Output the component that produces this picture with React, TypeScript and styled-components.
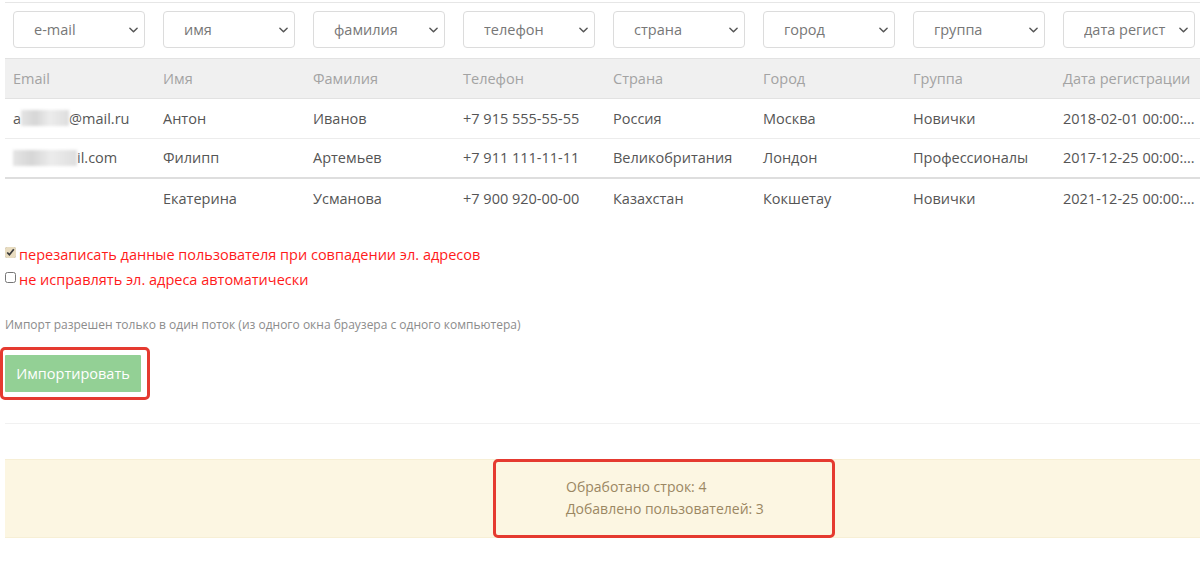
import React from 'react';
import styled, { createGlobalStyle } from 'styled-components';

const GlobalStyle = createGlobalStyle`
  html, body {
    margin: 0;
    padding: 0;
    background: #fff;
    overflow: hidden;
  }
  body {
    font-family: "Open Sans", "Liberation Sans", sans-serif;
  }
`;

const columns = [
  { pick: 'e-mail', title: 'Email' },
  { pick: 'имя', title: 'Имя' },
  { pick: 'фамилия', title: 'Фамилия' },
  { pick: 'телефон', title: 'Телефон' },
  { pick: 'страна', title: 'Страна' },
  { pick: 'город', title: 'Город' },
  { pick: 'группа', title: 'Группа' },
  { pick: 'дата регист', title: 'Дата регистрации' },
];

const rows = [
  {
    email: 'first',
    cells: ['Антон', 'Иванов', '+7 915 555-55-55', 'Россия', 'Москва', 'Новички', '2018-02-01 00:00:...'],
  },
  {
    email: 'second',
    cells: ['Филипп', 'Артемьев', '+7 911 111-11-11', 'Великобритания', 'Лондон', 'Профессионалы', '2017-12-25 00:00:...'],
  },
  {
    email: '',
    cells: ['Екатерина', 'Усманова', '+7 900 920-00-00', 'Казахстан', 'Кокшетау', 'Новички', '2021-12-25 00:00:...'],
  },
];

export default function App() {
  return (
    <Page>
      <GlobalStyle />
      <TopLine />
      <Table>
        <colgroup>
          {columns.map((c) => (
            <Col key={c.pick} />
          ))}
        </colgroup>
        <thead>
          <PickRow>
            {columns.map((c) => (
              <PickCell key={c.pick}>
                <SelectWrap>
                  <Select defaultValue={c.pick}>
                    <option>{c.pick}</option>
                  </Select>
                  <Chevron viewBox="0 0 10 6">
                    <path d="M1 1l4 4 4-4" fill="none" stroke="#555" strokeWidth="1.6" strokeLinecap="round" strokeLinejoin="round" />
                  </Chevron>
                </SelectWrap>
              </PickCell>
            ))}
          </PickRow>
          <HeadRow>
            {columns.map((c) => (
              <HeadCell key={c.title}>{c.title}</HeadCell>
            ))}
          </HeadRow>
        </thead>
        <tbody>
          {rows.map((r, i) => (
            <BodyRow key={i} $thick={i === 1}>
              <Cell>
                {r.email === 'first' && (
                  <>
                    a<Blur $w={48} />@mail.ru
                  </>
                )}
                {r.email === 'second' && (
                  <>
                    <Blur $w={64} />il.com
                  </>
                )}
              </Cell>
              {r.cells.map((v, j) => (
                <Cell key={j}>{v}</Cell>
              ))}
            </BodyRow>
          ))}
        </tbody>
      </Table>

      <Options>
        <OptionLine>
          <Check type="checkbox" defaultChecked />
          <OptionText>перезаписать данные пользователя при совпадении эл. адресов</OptionText>
        </OptionLine>
        <OptionLine>
          <Check type="checkbox" />
          <OptionText>не исправлять эл. адреса автоматически</OptionText>
        </OptionLine>
      </Options>

      <Note>Импорт разрешен только в один поток (из одного окна браузера с одного компьютера)</Note>

      <Highlight $pad="5px 6px 5px 2px" $ml={-5} $mt={14}>
        <ImportButton>Импортировать</ImportButton>
      </Highlight>

      <Divider />

      <Alert>
        <Highlight $pad="14px 60px 15px 70px" $ml={488} $mt={-1} $mb={-1}>
          <AlertText>
            Обработано строк: 4
            <br />
            Добавлено пользователей: 3
          </AlertText>
        </Highlight>
      </Alert>
    </Page>
  );
}

const Page = styled.div`
  padding-left: 5px;
  width: 1300px;
`;

const TopLine = styled.div`
  margin-top: 2px;
  height: 1px;
  width: 1195px;
  background: #e6e6e6;
`;

const Table = styled.table`
  border-collapse: collapse;
  table-layout: fixed;
  width: 1200px;
  font-size: 14.5px;
`;

const Col = styled.col`
  width: 150px;
`;

const PickRow = styled.tr`
  height: 55px;
`;

const PickCell = styled.td`
  padding: 8px 10px 9px 8px;
  vertical-align: top;
`;

const SelectWrap = styled.div`
  position: relative;
  width: 132px;
`;

const Select = styled.select`
  appearance: none;
  width: 132px;
  height: 37px;
  padding: 0 0 0 20px;
  border: 1px solid #dcdcdc;
  border-radius: 4px;
  background: #fff;
  color: #777;
  font-family: "Open Sans", "Liberation Sans", sans-serif;
  font-size: 14.5px;
  outline: none;
`;

const Chevron = styled.svg`
  position: absolute;
  right: 7px;
  top: 16px;
  width: 9px;
  height: 6px;
  pointer-events: none;
`;

const HeadRow = styled.tr`
  height: 40px;
  background: #f0f0f0;
  border-top: 1px solid #e2e2e2;
  border-bottom: 1px solid #e2e2e2;
`;

const HeadCell = styled.th`
  text-align: left;
  font-weight: 400;
  color: #a3a3a3;
  padding: 0 8px;
  white-space: nowrap;
  overflow: hidden;
`;

const BodyRow = styled.tr<{ $thick?: boolean }>`
  height: 40px;
  border-bottom: ${(p) => (p.$thick ? '2px solid #dedede' : '1px solid #ececec')};

  &:last-child {
    border-bottom: none;
  }
`;

const Cell = styled.td`
  padding: 0 8px;
  color: #555;
  white-space: nowrap;
  overflow: hidden;
`;

const Blur = styled.span<{ $w: number }>`
  display: inline-block;
  vertical-align: middle;
  width: ${(p) => p.$w}px;
  height: 16px;
  margin-top: -3px;
  background: linear-gradient(90deg, #e4e4e4 0%, #d6d6d6 30%, #ececec 60%, #dedede 100%);
  filter: blur(1.5px);
`;

const Options = styled.div`
  margin-top: 26px;
  display: flex;
  flex-direction: column;
  gap: 5px;
`;

const OptionLine = styled.label`
  display: flex;
  align-items: center;
  gap: 3px;
  height: 20px;
`;

const Check = styled.input`
  margin: 0;
  width: 11px;
  height: 11px;
  position: relative;
  top: -2px;
  accent-color: #e8dcc0;
`;

const OptionText = styled.span`
  color: #ff1a1a;
  font-size: 14.5px;
`;

const Note = styled.div`
  margin-top: 27px;
  font-size: 12px;
  color: #8c8c8c;
`;

const Highlight = styled.div<{ $pad: string; $ml?: number; $mt?: number; $mb?: number }>`
  display: inline-block;
  vertical-align: top;
  padding: ${(p) => p.$pad};
  margin-left: ${(p) => p.$ml ?? 0}px;
  margin-top: ${(p) => p.$mt ?? 0}px;
  margin-bottom: ${(p) => p.$mb ?? 0}px;
  border: 3px solid #e53a30;
  border-radius: 5px;
`;

const ImportButton = styled.button`
  display: block;
  width: 136px;
  height: 37px;
  border: none;
  border-radius: 1px;
  background: #93d095;
  color: #fff;
  font-family: "Open Sans", "Liberation Sans", sans-serif;
  font-size: 14.5px;
  cursor: pointer;
`;

const Divider = styled.div`
  margin-top: 23px;
  height: 1px;
  width: 1195px;
  background: #f1f1f1;
`;

const Alert = styled.div`
  margin-top: 35px;
  width: 1195px;
  background: #fcf6e2;
  border-top: 1px solid #f7efd5;
  border-bottom: 1px solid #f7efd5;
`;

const AlertText = styled.div`
  font-size: 14px;
  line-height: 22px;
  color: #9b8762;
  width: 206px;
`;
